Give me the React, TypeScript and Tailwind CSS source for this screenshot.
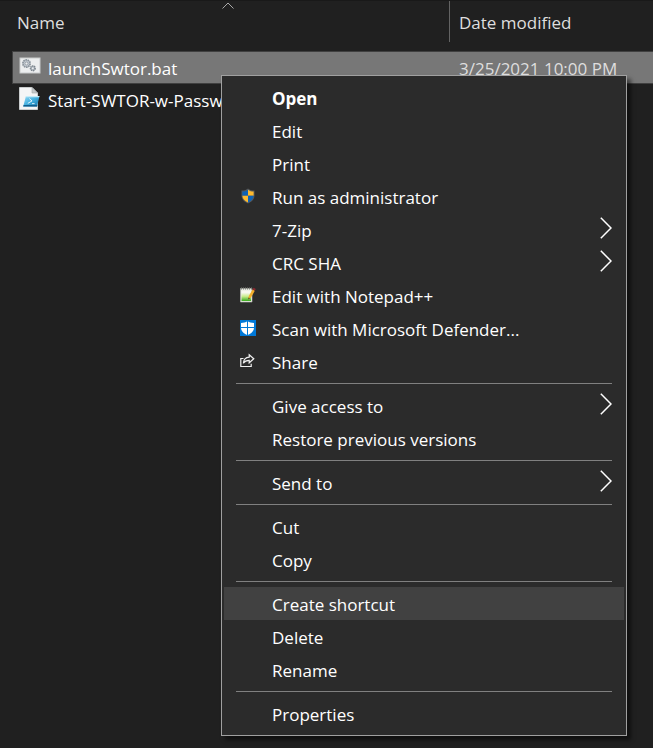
import type { ReactNode } from "react";

function GearsFileIcon() {
  return (
    <svg width="22" height="18" viewBox="0 0 22 18" aria-hidden="true">
      <rect x="1" y="1" width="20" height="15" fill="#eceeef" stroke="#c9cbcc" strokeWidth="1" />
      <circle cx="7.5" cy="6.5" r="3.6" fill="#c3cad1" stroke="#8b949c" strokeWidth="1.8" strokeDasharray="1.6 0.6" />
      <circle cx="7.5" cy="6.5" r="1.5" fill="#eceeef" stroke="#8b949c" strokeWidth="0.8" />
      <circle cx="13.8" cy="11.3" r="2.3" fill="#b4bcc4" stroke="#7c858e" strokeWidth="1.6" strokeDasharray="1.3 0.5" />
      <circle cx="13.8" cy="11.3" r="0.9" fill="#eceeef" />
    </svg>
  );
}

function PowerShellFileIcon() {
  return (
    <svg width="22" height="24" viewBox="0 0 22 24" aria-hidden="true">
      <defs>
        <linearGradient id="console" x1="0" y1="0" x2="1" y2="1">
          <stop offset="0" stopColor="#9adcf5" />
          <stop offset="0.5" stopColor="#41aede" />
          <stop offset="1" stopColor="#1273a8" />
        </linearGradient>
      </defs>
      <path d="M0.5 0.5H13L18.5 6V22.5H0.5Z" fill="#f4f5f6" stroke="#c9cccd" strokeWidth="1" />
      <path d="M13 0.5V6H18.5Z" fill="#c5c9cc" stroke="#a3a7aa" strokeWidth="0.6" />
      <path d="M7 9H20.5L18 19.5H4.2Z" fill="url(#console)" />
      <path d="M7 9H20.5L20.2 10.2H6.7Z" fill="#c5ebf8" />
      <path d="M4.6 18H18.4L18 19.5H4.2Z" fill="#125d8b" />
      <path d="M10.3 11.6L13 13.9L8.8 16.4" fill="none" stroke="#e4f5fc" strokeWidth="1" />
      <path d="M13 16.6H15.6" stroke="#e4f5fc" strokeWidth="0.9" />
    </svg>
  );
}

function ShieldIcon() {
  return (
    <svg width="16" height="16" viewBox="0 0 16 16" aria-hidden="true">
      <path d="M8 0.5C10 2.2 12 2.6 14.5 2.6V7.5C14.5 11.2 11.8 13.8 8 15.5C4.2 13.8 1.5 11.2 1.5 7.5V2.6C4 2.6 6 2.2 8 0.5Z" fill="#55595d" />
      <path d="M8 1.7C6.3 3 4.5 3.5 2.4 3.6V7.7H8Z" fill="#0f62b5" />
      <path d="M8 1.7C9.7 3 11.5 3.5 13.6 3.6V7.7H8Z" fill="#fdb92e" />
      <path d="M2.4 7.7H8V14.4C4.8 12.9 2.5 10.8 2.4 7.7Z" fill="#fdb92e" />
      <path d="M13.6 7.7H8V14.4C11.2 12.9 13.5 10.8 13.6 7.7Z" fill="#0f62b5" />
    </svg>
  );
}

function NotepadIcon() {
  return (
    <svg width="16" height="16" viewBox="0 0 16 16" aria-hidden="true">
      <defs>
        <linearGradient id="page" x1="0" y1="0" x2="0" y2="1">
          <stop offset="0.2" stopColor="#f7f8ef" />
          <stop offset="0.55" stopColor="#c9ed8c" />
          <stop offset="1" stopColor="#36a91c" />
        </linearGradient>
      </defs>
      <path d="M0.5 1.5H12V15H0.5Z" fill="#e8ebe2" stroke="#b8bcb2" strokeWidth="0.6" />
      <path d="M1.5 3.6H11V14H1.5Z" fill="url(#page)" />
      <path d="M1 1.5H12" stroke="#7c7e79" strokeWidth="2" strokeDasharray="1 1" />
      <path d="M8.2 12.5L8.8 9L12.6 2.4L14.8 3.7L11 10.4Z" fill="#f2ae2b" />
      <path d="M8.2 12.5L8.6 10.5L10 11.3Z" fill="#3c3422" />
      <path d="M12.6 2.4L13.6 0.8L15.8 2.1L14.8 3.7Z" fill="#8f2930" />
    </svg>
  );
}

function DefenderIcon() {
  return (
    <svg width="16" height="16" viewBox="0 0 16 16" aria-hidden="true">
      <rect width="16" height="16" fill="#0078d7" />
      <path d="M7.5 1C9.3 2.4 11.5 2.9 14 3V7.4C14 11 11.4 13.4 7.5 15C3.6 13.4 1 11 1 7.4V3C3.5 2.9 5.7 2.4 7.5 1Z" fill="#ffffff" />
      <path d="M7.5 0V16M0 7.5H16" stroke="#0078d7" strokeWidth="1" />
    </svg>
  );
}

function ShareIcon() {
  return (
    <svg width="16" height="16" viewBox="0 0 16 16" fill="none" stroke="#f0f0f0" strokeWidth="1.2" aria-hidden="true">
      <path d="M3.5 5.5H0.8V13.5H11.2V10.8" />
      <path d="M9.2 1.7L13.8 5.7L9.2 9.8V7.3C6.4 7.3 4.6 8.2 3.3 10.2C3.6 6.6 5.7 4.4 9.2 4.1Z" />
    </svg>
  );
}

function Chevron() {
  return (
    <svg width="12" height="22" viewBox="0 0 12 22" fill="none" stroke="#ffffff" strokeWidth="1.5" className="mb-1.5" aria-hidden="true">
      <path d="M0.8 0.8L11 11L0.8 21.2" />
    </svg>
  );
}

type Item = {
  label: string;
  icon?: ReactNode;
  submenu?: boolean;
  isDefault?: boolean;
  active?: boolean;
};

const groups: Item[][] = [
  [
    { label: "Open", isDefault: true },
    { label: "Edit" },
    { label: "Print" },
    { label: "Run as administrator", icon: <ShieldIcon /> },
    { label: "7-Zip", submenu: true },
    { label: "CRC SHA", submenu: true },
    { label: "Edit with Notepad++", icon: <NotepadIcon /> },
    { label: "Scan with Microsoft Defender...", icon: <DefenderIcon /> },
    { label: "Share", icon: <ShareIcon /> },
  ],
  [{ label: "Give access to", submenu: true }, { label: "Restore previous versions" }],
  [{ label: "Send to", submenu: true }],
  [{ label: "Cut" }, { label: "Copy" }],
  [{ label: "Create shortcut", active: true }, { label: "Delete" }, { label: "Rename" }],
  [{ label: "Properties" }],
];

function MenuItem({ label, icon, submenu, isDefault, active }: Item) {
  return (
    <button
      type="button"
      role="menuitem"
      aria-haspopup={submenu ? "menu" : undefined}
      className={`flex h-[33px] w-full items-center pt-0.5 pr-3 pl-4 text-left text-white hover:bg-[#414141] ${
        active ? "bg-[#414141]" : ""
      } ${isDefault ? "font-bold" : ""}`}
    >
      <span className="mb-1 w-8 shrink-0">{icon}</span>
      <span className="flex-1">{label}</span>
      {submenu && <Chevron />}
    </button>
  );
}

function ContextMenu() {
  return (
    <div
      role="menu"
      className="absolute top-[75px] left-[221px] w-[406px] border border-[#a0a0a0] bg-[#2b2b2b] px-0.5 py-[5px] shadow-[4px_4px_4px_rgba(0,0,0,0.5)]"
    >
      {groups.map((items, i) => (
        <div key={items[0].label} role="group">
          {i > 0 && <hr className="mx-3 my-[5px] border-t border-[#808080]" />}
          {items.map((item) => (
            <MenuItem key={item.label} {...item} />
          ))}
        </div>
      ))}
    </div>
  );
}

export default function App() {
  return (
    <main className="relative min-h-screen overflow-hidden bg-[#202020] font-['Open_Sans','Noto_Sans',sans-serif] text-[17px] leading-6">
      <div className="border-t border-[#191919] pl-3">
        <table className="w-full table-fixed border-separate border-spacing-0 text-left">
          <colgroup>
            <col className="w-[438px]" />
            <col />
          </colgroup>
          <thead className="text-[#dedede]">
            <tr>
              <th scope="col" aria-sort="ascending" className="h-[50px] p-0 align-top font-normal">
                <div className="relative flex h-[41px] items-center border-r border-[#636363] pt-0.5 pl-[5px]">
                  <button type="button">Name</button>
                  <svg width="12" height="7" viewBox="0 0 12 7" fill="none" stroke="#a8a8a8" className="absolute top-px left-[210px]" aria-hidden="true">
                    <path d="M0.5 6.5L6 1L11.5 6.5" />
                  </svg>
                </div>
              </th>
              <th scope="col" className="h-[50px] p-0 align-top font-normal">
                <div className="flex h-[41px] items-center pt-0.5 pl-[9px]">
                  <button type="button">Date modified</button>
                </div>
              </th>
            </tr>
          </thead>
          <tbody className="text-white">
            <tr aria-selected="true" className="bg-[#777777]">
              <td className="h-[33px] border-y border-l border-[#404040] p-0 pt-0.5">
                <div className="flex items-center pl-1.5">
                  <span className="mb-1.5 w-[29px] shrink-0">
                    <GearsFileIcon />
                  </span>
                  launchSwtor.bat
                </div>
              </td>
              <td className="h-[33px] border-y border-[#404040] p-0 pt-0.5 pl-[9px] text-[#dedede]">3/25/2021 10:00 PM</td>
            </tr>
            <tr>
              <td className="h-[33px] p-0">
                <div className="flex items-center pl-[7px]">
                  <span className="mb-1 w-[29px] shrink-0">
                    <PowerShellFileIcon />
                  </span>
                  Start-SWTOR-w-Passw
                </div>
              </td>
              <td />
            </tr>
          </tbody>
        </table>
      </div>
      <ContextMenu />
    </main>
  );
}
